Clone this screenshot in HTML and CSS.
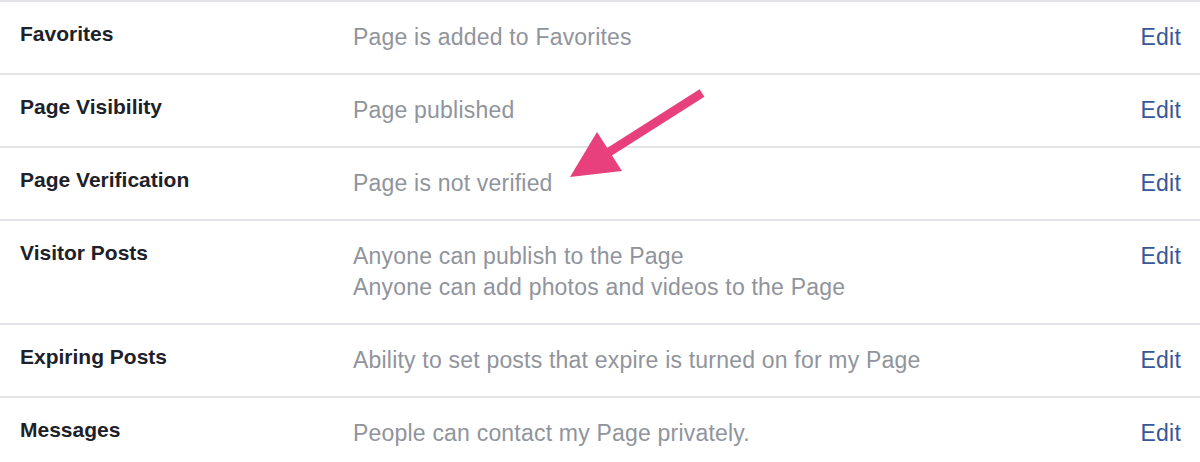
FILE: index.html
```html
<!DOCTYPE html>
<html lang="en">
<head>
    <meta charset="UTF-8">
    <meta name="viewport" content="width=device-width, initial-scale=1.0">
    <title>Page Settings</title>
    <link rel="stylesheet" href="styles.css">
</head>
<body>

    <div class="settings">

        <div class="row">
            <div class="label">Favorites</div>
            <div class="desc">Page is added to Favorites</div>
            <a class="edit" href="#">Edit</a>
        </div>

        <div class="row">
            <div class="label">Page Visibility</div>
            <div class="desc">Page published</div>
            <a class="edit" href="#">Edit</a>
        </div>

        <div class="row">
            <div class="label">Page Verification</div>
            <div class="desc">Page is not verified</div>
            <a class="edit" href="#">Edit</a>
        </div>

        <div class="row">
            <div class="label">Visitor Posts</div>
            <div class="desc">
                <div>Anyone can publish to the Page</div>
                <div>Anyone can add photos and videos to the Page</div>
            </div>
            <a class="edit" href="#">Edit</a>
        </div>

        <div class="row">
            <div class="label">Expiring Posts</div>
            <div class="desc">Ability to set posts that expire is turned on for my Page</div>
            <a class="edit" href="#">Edit</a>
        </div>

        <div class="row">
            <div class="label">Messages</div>
            <div class="desc">People can contact my Page privately.</div>
            <a class="edit" href="#">Edit</a>
        </div>

        <!-- annotation arrow drawn over the list -->
        <svg class="arrow" width="150" height="100" viewBox="560 85 150 100">
            <line x1="702" y1="93" x2="606" y2="154" stroke="#e8407c" stroke-width="9"/>
            <polygon points="570,177 597,132 622,171" fill="#e8407c"/>
        </svg>

    </div>

</body>
</html>
```

FILE: styles.css
```css
*{
    margin: 0;
    padding: 0;
    box-sizing: border-box;
}

body{
    background: #fff;
    font-family: "Liberation Sans", Arial, sans-serif;
}

.settings{
    position: relative;
    border-top: 2px solid #e3e4e7;
}

.row{
    display: flex;
    align-items: flex-start;
    padding: 20px 19px 20px 20px;
    border-bottom: 2px solid #e3e4e7;
}

.label{
    width: 333px;
    flex-shrink: 0;
    font-size: 21px;
    line-height: 24px;
    font-weight: 700;
    color: #1d2129;
}

.desc{
    flex: 1;
    font-size: 23px;
    line-height: 31px;
    letter-spacing: 0.2px;
    color: #90949c;
}

.edit{
    font-size: 23px;
    line-height: 31px;
    letter-spacing: 0.2px;
    color: #365899;
    text-decoration: none;
}

.arrow{
    position: absolute;
    left: 560px;
    top: 83px;
}
```
